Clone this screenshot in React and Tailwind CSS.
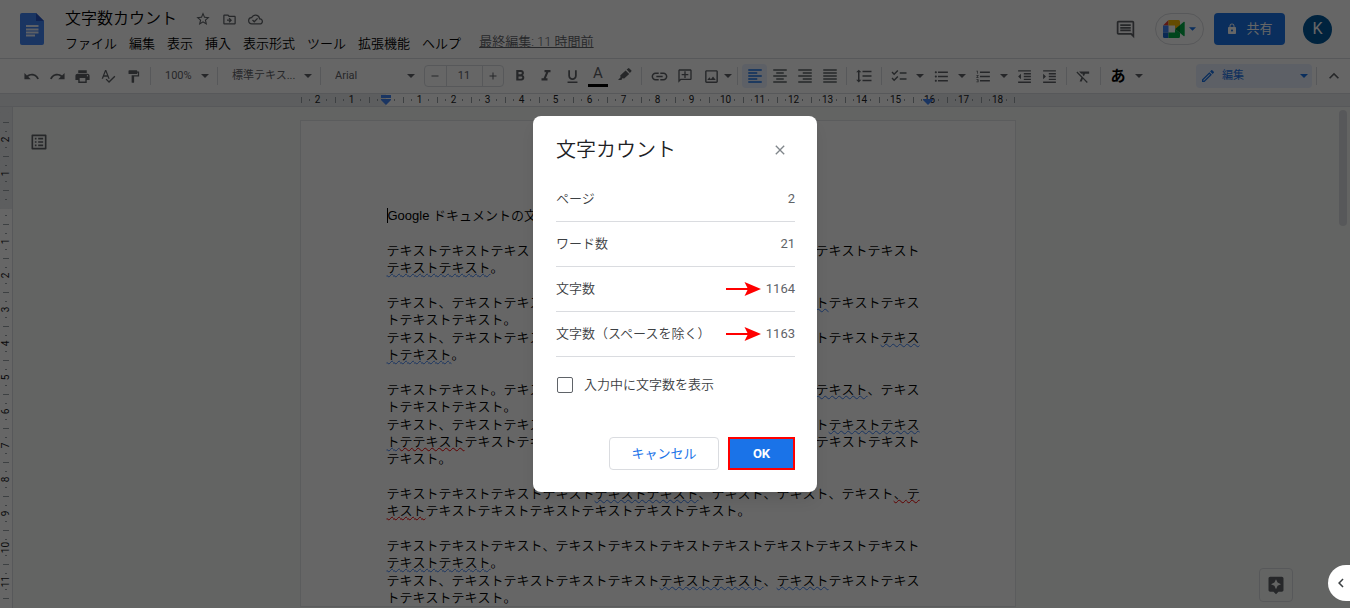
import React from "react";
import {
  MdUndo, MdRedo, MdPrint, MdSpellcheck, MdFormatPaint, MdFormatBold, MdFormatItalic,
  MdFormatUnderlined, MdLink, MdOutlineAddComment, MdOutlineImage, MdFormatAlignLeft,
  MdFormatAlignCenter, MdFormatAlignRight, MdFormatAlignJustify, MdFormatLineSpacing,
  MdChecklist, MdFormatListBulleted, MdFormatListNumbered, MdFormatIndentDecrease,
  MdFormatIndentIncrease, MdFormatClear, MdOutlineEdit, MdKeyboardArrowUp, MdStarBorder,
  MdOutlineDriveFileMove, MdOutlineCloudDone, MdOutlineComment, MdLock, MdListAlt,
  MdAssistant, MdChevronLeft, MdClose, MdAdd, MdRemove,
} from "react-icons/md";

function Caret({ className = "" }) {
  return (
    <svg viewBox="0 0 8 4" className={"h-1 w-2 shrink-0 fill-current " + className} aria-hidden="true">
      <path d="M0 0h8L4 4z" />
    </svg>
  );
}

function Sep() {
  return <span className="mx-1 h-[18px] w-px shrink-0 bg-[#dadce0]" />;
}

function Tool({ label, wide, active, children }) {
  return (
    <button
      type="button"
      aria-label={label}
      className={
        "flex h-6 shrink-0 items-center justify-center rounded-sm " +
        (wide ? "w-[26px] " : "w-[25px] ") +
        (active ? "bg-[#e8f0fe] text-[#1a73e8]" : "")
      }
    >
      {children}
    </button>
  );
}

function MenuTool({ label, children }) {
  return (
    <div className="flex shrink-0 items-center">
      <Tool label={label} wide>{children}</Tool>
      <button type="button" aria-label={label + "のオプション"} className="flex h-6 w-4 items-center justify-center">
        <Caret />
      </button>
    </div>
  );
}

function Dropdown({ label, value, className }) {
  return (
    <div className={"relative flex h-6 shrink-0 items-center " + className}>
      <select aria-label={label} defaultValue={value} className="h-full w-full appearance-none bg-transparent pl-[10px] text-[11px] outline-none">
        <option>{value}</option>
      </select>
      <Caret className="pointer-events-none absolute right-1" />
    </div>
  );
}

function DocsLogo() {
  return (
    <svg viewBox="0 0 24 32" className="h-8 w-6" aria-hidden="true">
      <path fill="#4285f4" d="M2 0h14l8 8v22a2 2 0 0 1-2 2H2a2 2 0 0 1-2-2V2a2 2 0 0 1 2-2z" />
      <path fill="#2a56c6" d="M16 0l8 8h-8z" />
      <path fill="#e8f0fe" d="M6 12h12.500v2H6zM6 15.500h12.500v2H6zM6 18.500h12.500v2H6zM6 21.500h9v2H6z" />
    </svg>
  );
}

function MeetLogo() {
  return (
    <svg viewBox="0 0 22 18" className="h-[18px] w-[22px]" aria-hidden="true">
      <path fill="#ea4335" d="M0 5.500L5.500 0v5.500z" />
      <path fill="#4285f4" d="M0 5.500h5.500v7H0z" />
      <path fill="#1967d2" d="M0 12.500h5.500V18H1.500A1.500 1.500 0 0 1 0 16.500z" />
      <path fill="#fbbc04" d="M5.500 0h10A1.500 1.500 0 0 1 17 1.500v4L12 9V5.500H5.500z" />
      <path fill="#00ac47" d="M5.500 12.500H12V9l5 4v3.500a1.500 1.500 0 0 1-1.500 1.500h-10z" />
      <path fill="#00832d" d="M12 9l5-4v8z" />
      <path fill="#00ac47" d="M17 5l3.600-3c.6-.4 1.100-.1 1.100.6v12.800c0 .7-.5 1-1.100.6L17 13z" />
    </svg>
  );
}

function MarkerIcon() {
  return (
    <svg viewBox="0 0 16 16" className="size-4 fill-current" aria-hidden="true">
      <path d="M10.600 1.600l1.400-1.200a1 1 0 0 1 1.400 0l1.800 1.800a1 1 0 0 1 0 1.400l-1.300 1.300z" />
      <path d="M9.600 2.400l3.600 3.600-5 4.600-2-.3-.7 1.700H2l2.600-2.800-.4-1.800z" />
    </svg>
  );
}

function HorizontalRuler() {
  const marks = Array.from({ length: 21 }, (_, i) => i - 2);
  return (
    <div className="flex h-[14px] shrink-0 justify-center border-y border-[#dadce0] bg-[#e8eaed] pr-[35px] text-[10px] text-[#202124]">
      <div className="relative flex">
        {marks.map((n) => (
          <div
            key={n}
            className={
              "flex h-3 w-[34px] items-center " +
              (n === 0 ? "bg-linear-to-r from-transparent from-50% to-white to-50%" : n === 16 ? "bg-linear-to-r from-white from-50% to-transparent to-50%" : n > 0 && n < 16 ? "bg-white" : "")
            }
          >
            <span className="h-[6px] w-px bg-[#9aa0a6]" />
            <span className="ml-[7px] h-[2px] w-px shrink-0 bg-[#9aa0a6]" />
            <span className="flex min-w-0 flex-1 justify-center leading-none">{n === 0 ? "" : Math.abs(n)}</span>
            <span className="mr-2 h-[2px] w-px shrink-0 bg-[#9aa0a6]" />
          </div>
        ))}
        <span className="absolute right-0 top-[3px] h-[6px] w-px bg-[#9aa0a6]" />
        <svg viewBox="0 0 10 10" className="absolute left-[80px] top-px size-[10px] fill-[#4285f4]" aria-hidden="true">
          <path d="M0 0h10v3H0zM0 4h10v1L5 10 0 5z" />
        </svg>
        <svg viewBox="0 0 10 6" className="absolute left-[622px] top-[5px] h-[6px] w-[10px] fill-[#4285f4]" aria-hidden="true">
          <path d="M0 0h10v1L5 6 0 1z" />
        </svg>
      </div>
    </div>
  );
}

function VerticalRuler() {
  const marks = Array.from({ length: 14 }, (_, i) => i - 2);
  return (
    <div className="w-[13px] shrink-0 overflow-hidden border-r border-[#dadce0] bg-linear-to-b from-[#e8eaed] from-[102px] to-white to-[102px] pt-[15px] text-[10px] text-[#202124]">
      {marks.map((n) => (
        <div key={n} className="flex h-[34px] flex-col items-center">
          <span className="h-px w-[6px] shrink-0 bg-[#9aa0a6]" />
          <span className="mt-2 h-px w-[2px] shrink-0 bg-[#9aa0a6]" />
          <span className="flex min-h-0 flex-1 -rotate-90 items-center leading-none">{n === 0 ? "" : Math.abs(n)}</span>
          <span className="mb-2 h-px w-[2px] shrink-0 bg-[#9aa0a6]" />
        </div>
      ))}
      <span className="mx-auto block h-px w-[6px] bg-[#9aa0a6]" />
    </div>
  );
}

const T = (n) => "テキスト".repeat(n);

function Grammar({ children }) {
  return <span className="underline decoration-[#4285f4] decoration-wavy decoration-1 underline-offset-1">{children}</span>;
}

function Spelling({ children }) {
  return <span className="underline decoration-[#f00000] decoration-wavy decoration-1 underline-offset-1">{children}</span>;
}

function Page() {
  return (
    <article className="flex w-[716px] shrink-0 flex-col gap-[18px] border border-[#e3e5e8] bg-white pl-[86px] pr-[87px] pt-[86px] font-['Liberation_Sans','Noto_Sans_CJK_JP',sans-serif] text-[13px] font-[350] leading-[17px] text-black [font-kerning:none]">
      <p className="flex items-center whitespace-pre font-normal">
        <span className="h-[15px] w-px bg-black" />Google <span className="font-[350]">ドキュメントの文字数をカウント</span>
      </p>
      <p>{T(6)}、{T(4)}<Grammar>{T(2)}</Grammar>。</p>
      <div className="flex flex-col gap-px">
        <p>{T(1)}、{T(4)}、<Grammar>{T(3)}</Grammar>{T(4)}。</p>
        <p>{T(1)}、{T(4)}、{T(4)}<Grammar>{T(2)}</Grammar>。</p>
      </div>
      <div className="flex flex-col gap-px">
        <p>{T(2)}。{T(5)}<Grammar>{T(2)}</Grammar>、{T(3)}。</p>
        <p>
          {T(1)}、{T(4)}、{T(3)}<Grammar>{T(2)}</Grammar><Spelling>テ{T(1)}</Spelling>
          {T(2)}、{T(2)}。{T(2)}、{T(3)}。
        </p>
      </div>
      <p>
        {T(4)}<Grammar>{T(2)}</Grammar>、{T(1)}、{T(1)}、{T(1)}<Spelling>、{T(1)}</Spelling>{T(6)}。
      </p>
      <div className="flex flex-col gap-px">
        <p>{T(3)}、{T(7)}<Grammar>{T(2)}</Grammar>。</p>
        <p>{T(1)}、{T(4)}<Grammar>{T(2)}</Grammar>、<Grammar>{T(1)}</Grammar>{T(4)}。</p>
      </div>
    </article>
  );
}

function Header() {
  const menus = ["ファイル", "編集", "表示", "挿入", "表示形式", "ツール", "拡張機能", "ヘルプ"];
  return (
    <header className="flex h-[59px] shrink-0 items-start border-b border-[#dadce0] pl-5 pr-[18px] text-[#5f6368]">
      <a href="#home" aria-label="ドキュメント ホーム" className="mt-[13px]"><DocsLogo /></a>
      <div className="ml-[21px] mt-2 flex flex-col">
        <div className="flex h-[22px] items-center">
          <h1 className="text-base font-[350] text-black [font-kerning:none]">文字数カウント</h1>
          <div className="ml-[18px] flex items-center gap-[11px]">
            <button type="button" aria-label="スターを付ける"><MdStarBorder className="size-4" /></button>
            <button type="button" aria-label="移動"><MdOutlineDriveFileMove className="size-[15px]" /></button>
            <button type="button" aria-label="保存状況"><MdOutlineCloudDone className="size-[15px]" /></button>
          </div>
        </div>
        <div className="mt-1 flex h-5 items-center text-[13px] font-[350]">
          <nav className="flex gap-3 text-black">
            {menus.map((m) => <button type="button" key={m}>{m}</button>)}
          </nav>
          <a href="#history" className="mb-1 ml-[18px] underline">最終編集: 11 時間前</a>
        </div>
      </div>
      <div className="ml-auto mt-[13px] flex h-8 items-center">
        <button type="button" aria-label="コメント履歴" className="mr-[19px]"><MdOutlineComment className="size-[21px]" /></button>
        <button type="button" aria-label="通話に参加" className="flex h-8 w-[49px] items-center justify-center gap-1 rounded-full border border-[#dadce0] text-[#1a73e8]">
          <MeetLogo /><Caret className="w-[7px]" />
        </button>
        <button type="button" className="ml-[10px] flex h-8 w-[71px] items-center justify-center gap-2 rounded bg-[#1a73e8] text-[13px] text-white">
          <MdLock className="size-3" />共有
        </button>
        <button type="button" aria-label="アカウント" className="ml-[18px] flex size-[29px] items-center justify-center rounded-full bg-[#01579b] text-base text-white">K</button>
      </div>
    </header>
  );
}

function Toolbar() {
  return (
    <div className="flex h-[34px] shrink-0 items-center pl-[19px] pr-[3px] text-[#5f6368]">
      <Tool label="元に戻す"><MdUndo className="size-[17px]" /></Tool>
      <Tool wide label="やり直し"><MdRedo className="size-[17px]" /></Tool>
      <Tool label="印刷"><MdPrint className="size-[17px]" /></Tool>
      <Tool label="スペルと文法のチェック"><MdSpellcheck className="size-4" /></Tool>
      <Tool wide label="書式を貼り付け"><MdFormatPaint className="size-[15px]" /></Tool>
      <Sep />
      <Dropdown label="ズーム" value="100%" className="w-[58px]" />
      <Sep />
      <Dropdown label="スタイル" value="標準テキス..." className="w-[94px]" />
      <Sep />
      <Dropdown label="フォント" value="Arial" className="w-[94px]" />
      <div className="ml-[5px] flex h-[22px] w-20 shrink-0 items-stretch rounded-sm border border-[#dadce0]">
        <button type="button" aria-label="フォントサイズを縮小" className="flex flex-1 items-center justify-center"><MdRemove className="size-3" /></button>
        <input aria-label="フォントサイズ" defaultValue="11" className="w-[37px] border-x border-[#dadce0] bg-transparent text-center text-[11px] outline-none" />
        <button type="button" aria-label="フォントサイズを拡大" className="flex flex-1 items-center justify-center"><MdAdd className="size-3" /></button>
      </div>
      <div className="ml-[3px] flex">
        <Tool wide label="太字"><MdFormatBold className="size-[18px]" /></Tool>
        <Tool wide label="斜体"><MdFormatItalic className="size-[18px]" /></Tool>
        <Tool wide label="下線"><MdFormatUnderlined className="size-[17px]" /></Tool>
        <Tool wide label="テキストの色">
          <span className="flex h-[22px] w-5 items-start justify-center border-b-[3px] border-black text-[15px] leading-[17px]">A</span>
        </Tool>
        <Tool wide label="ハイライトの色"><MarkerIcon /></Tool>
      </div>
      <Sep />
      <Tool wide label="リンクを挿入"><MdLink className="size-[19px]" /></Tool>
      <Tool wide label="コメントを追加"><MdOutlineAddComment className="size-4 -scale-x-100" /></Tool>
      <Tool wide label="画像を挿入"><MdOutlineImage className="size-[17px]" /></Tool>
      <button type="button" aria-label="画像のオプション" className="flex h-6 w-[9px] items-center"><Caret /></button>
      <Sep />
      <Tool active label="左揃え"><MdFormatAlignLeft className="size-[18px]" /></Tool>
      <Tool label="中央揃え"><MdFormatAlignCenter className="size-[18px]" /></Tool>
      <Tool label="右揃え"><MdFormatAlignRight className="size-[18px]" /></Tool>
      <Tool label="両端揃え"><MdFormatAlignJustify className="size-[18px]" /></Tool>
      <Sep />
      <Tool wide label="行間隔"><MdFormatLineSpacing className="size-[18px]" /></Tool>
      <Sep />
      <MenuTool label="チェックリスト"><MdChecklist className="size-[18px]" /></MenuTool>
      <MenuTool label="箇条書き"><MdFormatListBulleted className="size-[17px]" /></MenuTool>
      <MenuTool label="番号付きリスト"><MdFormatListNumbered className="size-[17px]" /></MenuTool>
      <Tool label="インデント減"><MdFormatIndentDecrease className="size-[17px]" /></Tool>
      <Tool label="インデント増"><MdFormatIndentIncrease className="size-[17px]" /></Tool>
      <Sep />
      <Tool label="書式をクリア"><MdFormatClear className="size-[17px]" /></Tool>
      <Sep />
      <MenuTool label="入力ツール"><span className="text-[15px] font-bold leading-none text-black">あ</span></MenuTool>
      <div className="relative ml-auto flex h-6 w-[116px] items-center rounded bg-[#e8f0fe] text-[#1a73e8]">
        <MdOutlineEdit className="pointer-events-none absolute left-1 size-4" />
        <select aria-label="編集モード" defaultValue="編集" className="h-full w-full appearance-none bg-transparent pl-[26px] text-[11px] outline-none">
          <option>編集</option>
        </select>
        <Caret className="pointer-events-none absolute right-1" />
      </div>
      <Sep />
      <Tool wide label="メニューを隠す"><MdKeyboardArrowUp className="size-5" /></Tool>
    </div>
  );
}

function Arrow() {
  return (
    <svg viewBox="0 0 36 14" className="ml-auto mr-1 h-[14px] w-9 fill-[#ff0000]" aria-hidden="true">
      <path d="M0 6h22v2H0z" />
      <path d="M18.500 0L35 7l-16.500 7 3.500-7z" />
    </svg>
  );
}

function WordCountDialog() {
  const rows = [
    ["ページ", "2", false],
    ["ワード数", "21", false],
    ["文字数", "1164", true],
    ["文字数（スペースを除く）", "1163", true],
  ];
  return (
    <div role="dialog" aria-labelledby="dialog-title" className="w-[284px] rounded-lg bg-white pb-[22px] pl-[23px] pr-[22px] pt-[19px] text-[13px] text-[#3c4043] shadow-lg">
      <div className="flex h-[30px] items-center justify-between">
        <h2 id="dialog-title" className="text-xl font-[350] text-[#202124]">文字カウント</h2>
        <button type="button" aria-label="閉じる" className="mr-[7px] text-[#80868b]"><MdClose className="size-4" /></button>
      </div>
      <dl className="mt-3">
        {rows.map(([label, value, marked]) => (
          <div key={label} className="flex h-[45px] items-center justify-between border-b border-[#dadce0]">
            <dt className="whitespace-nowrap font-[350]">{label}</dt>
            {marked && <Arrow />}
            <dd className="text-[#5f6368]">{value}</dd>
          </div>
        ))}
      </dl>
      <label className="mt-[18px] flex h-5 items-center font-[350]">
        <input type="checkbox" className="ml-px mr-[11px] size-4 appearance-none rounded-xs border border-[#5f6368] bg-white" />
        入力中に文字数を表示
      </label>
      <div className="mt-[42px] flex justify-end gap-[9px]">
        <button type="button" className="h-[33px] w-[110px] rounded border border-[#dadce0] text-[#1a73e8]">キャンセル</button>
        <button type="button" className="h-[33px] w-[67px] border-2 border-[#ff0000] bg-[#1a73e8] font-bold text-white">OK</button>
      </div>
    </div>
  );
}

export default function App() {
  return (
    <div lang="ja" className="relative flex h-screen flex-col overflow-hidden bg-white font-['Roboto','Noto_Sans_CJK_JP',sans-serif]">
      <Header />
      <Toolbar />
      <HorizontalRuler />
      <div className="flex min-h-0 flex-1">
        <VerticalRuler />
        <main className="relative flex min-w-0 flex-1 items-start justify-center overflow-hidden bg-[#f8fbf8] pr-[48px] pt-[13px]">
          <button type="button" aria-label="概要を表示" className="absolute left-4 top-[25px] text-[#5f6368]"><MdListAlt className="size-5" /></button>
          <Page />
          <div className="absolute right-[3px] top-[3px] h-[116px] w-2 rounded-full bg-[#dadce0]" />
          <button type="button" aria-label="データ探索" className="absolute bottom-[6px] right-[57px] flex size-[34px] items-center justify-center rounded-sm border border-[#dadce0] text-[#5f6368]">
            <MdAssistant className="size-5" />
          </button>
        </main>
      </div>
      <div className="absolute inset-0 flex items-center justify-center bg-black/60">
        <WordCountDialog />
      </div>
      <button type="button" aria-label="サイドパネルを表示" className="absolute bottom-[7px] right-0 flex h-9 w-[22px] items-center justify-center rounded-l-full bg-white text-[#3c4043]">
        <MdChevronLeft className="ml-1 size-[18px]" />
      </button>
    </div>
  );
}
